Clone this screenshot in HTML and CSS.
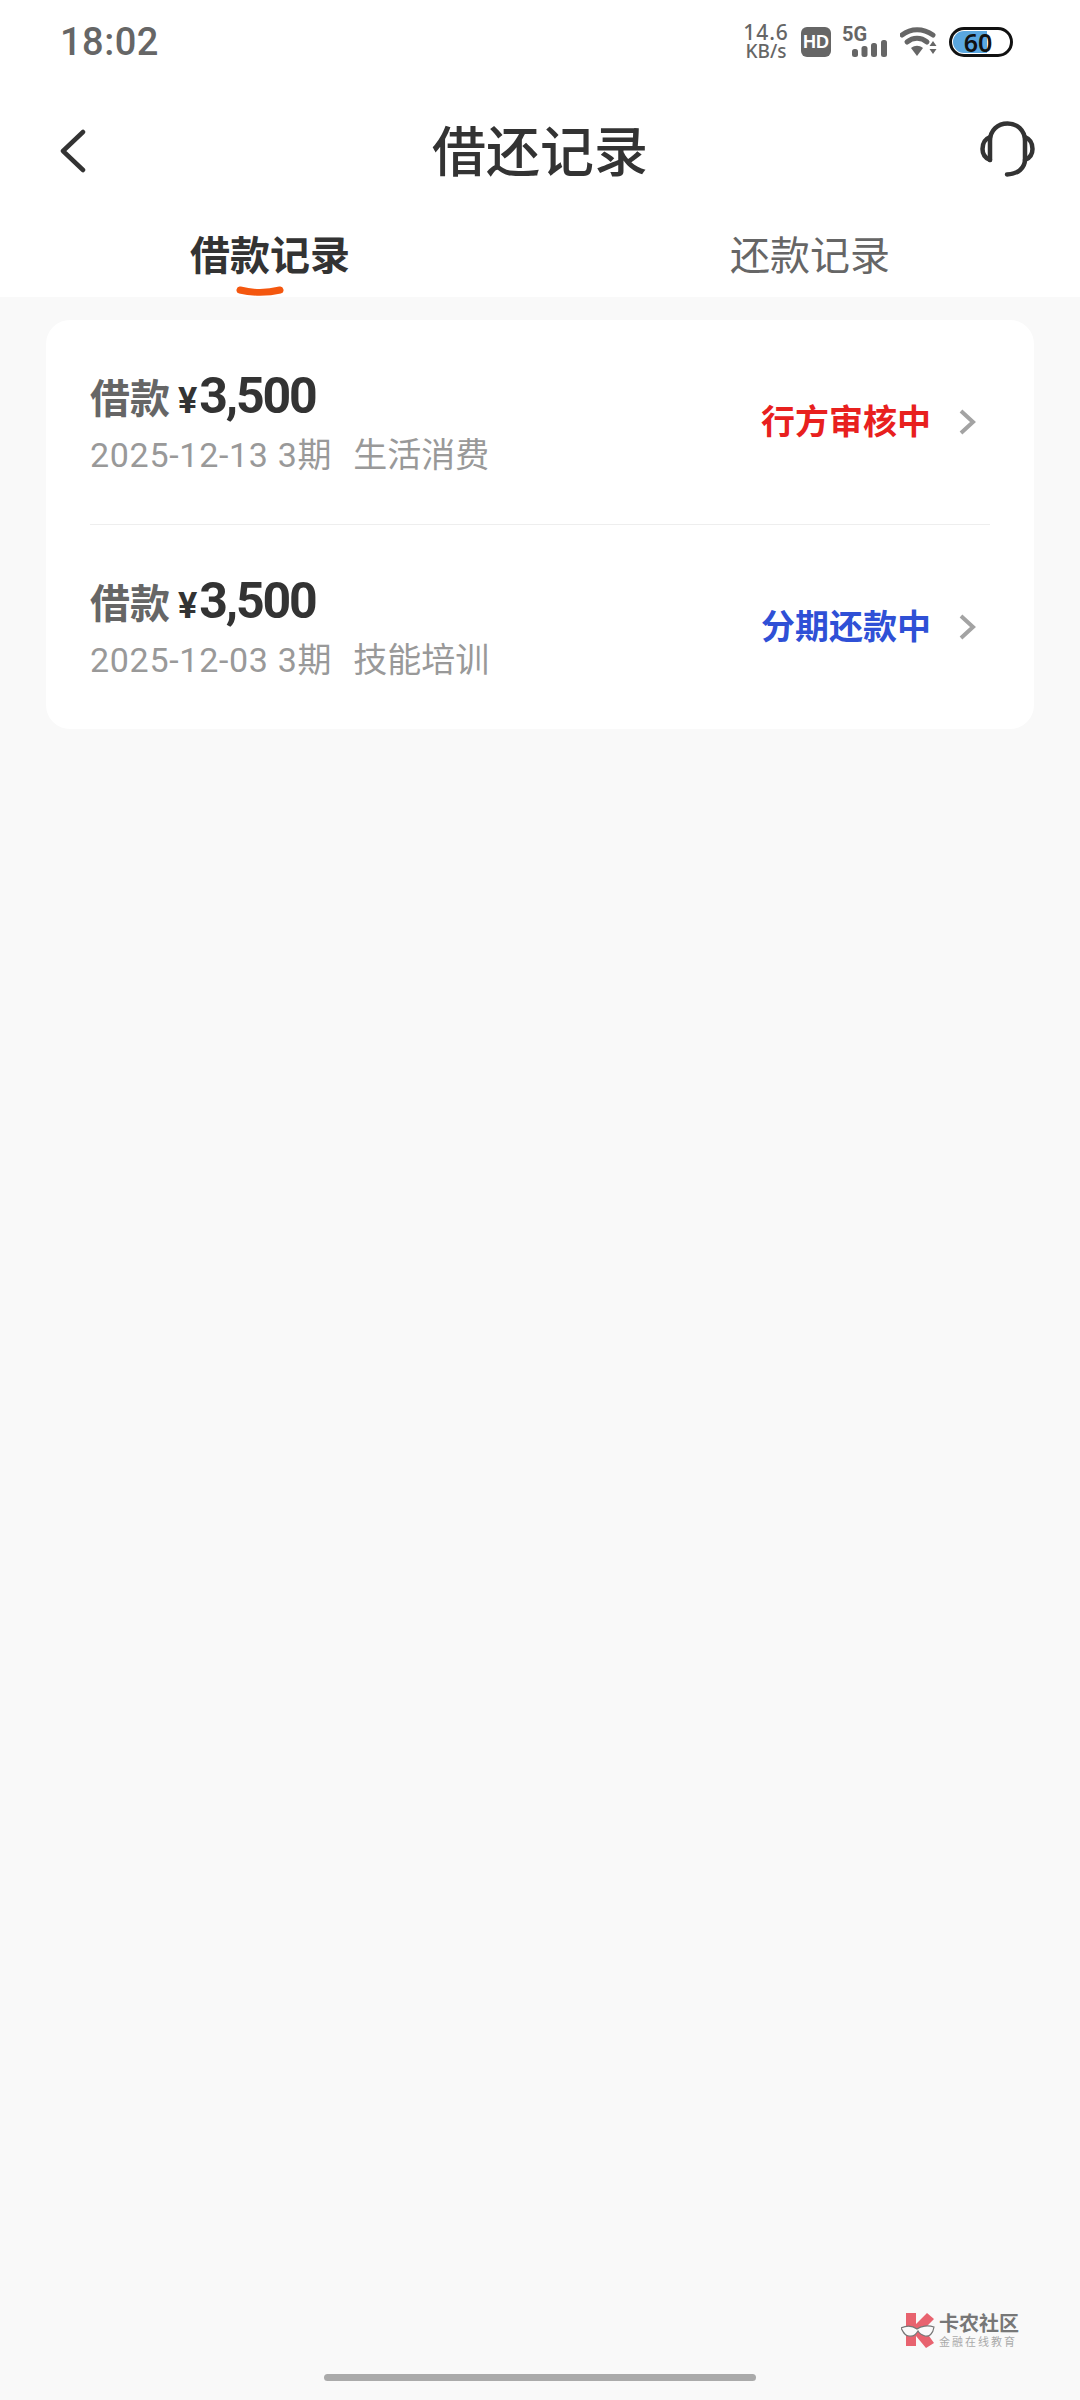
FILE: index.html
```html
<!DOCTYPE html>
<html>
<head>
    <title>借还记录</title>
    <link rel="stylesheet" href="styles.css">
</head>
<body>
    <div class="page">
        <div class="status-bar">
            <span class="time">18:02</span>
            <div class="status-icons">
                <div class="speed"><span class="speed-num">14.6</span><span class="speed-unit">KB/s</span></div>
                <span class="hd">HD</span>
                <div class="signal">
                    <span class="five-g">5G</span>
                    <svg class="signal-bars" width="35" height="17" viewBox="0 0 35 17">
                        <rect x="0" y="9" width="6" height="8" rx="2.5" fill="#666"/>
                        <rect x="9.5" y="6" width="6" height="11" rx="2.5" fill="#666"/>
                        <rect x="19" y="3" width="6" height="14" rx="2.5" fill="#666"/>
                        <rect x="29" y="0" width="6" height="17" rx="2.5" fill="#666"/>
                    </svg>
                </div>
                <svg class="wifi" width="37" height="30" viewBox="0 0 37 30">
                    <path d="M2 8C11 1 23 1 33 8" fill="none" stroke="#666" stroke-width="5" stroke-linecap="round"/>
                    <path d="M7 15C13 10 21 10 27 15" fill="none" stroke="#666" stroke-width="5" stroke-linecap="round"/>
                    <path d="M11 21C15 18 19 18 23 21L17 29Z" fill="#666"/>
                    <path d="M33 14L36.500 19H29.500ZM29.500 22H36.500L33 27Z" fill="#666"/>
                </svg>
                <div class="battery"><div class="battery-fill"></div><span class="battery-num">60</span></div>
            </div>
        </div>

        <div class="nav-bar">
            <svg class="back" width="28" height="44" viewBox="0 0 28 44">
                <path d="M24 3L4 22L24 41" fill="none" stroke="#333" stroke-width="4.500" stroke-linecap="round" stroke-linejoin="round"/>
            </svg>
            <h1 class="title">借还记录</h1>
            <svg class="service" width="55" height="56" viewBox="0 0 55 56">
                <path d="M10 39V20C10 9 18 2.500 27.500 2.500C37 2.500 45 9 45 20V38C45 47 38 53 27 53.500" fill="none" stroke="#333" stroke-width="4.500" stroke-linecap="round"/>
                <path d="M10 16C5 18 2.500 23 2.500 28C2.500 33 5 37 10 39" fill="none" stroke="#333" stroke-width="4.500" stroke-linecap="round"/>
                <path d="M45 16C50 18 52.500 23 52.500 28C52.500 33 50 37 45 39" fill="none" stroke="#333" stroke-width="4.500" stroke-linecap="round"/>
            </svg>
        </div>

        <div class="tabs">
            <div class="tab active">借款记录
                <svg class="tab-mark" width="48" height="12" viewBox="0 0 48 12">
                    <path d="M4 4C16 7 32 7 44 4" fill="none" stroke="#f4570f" stroke-width="7" stroke-linecap="round"/>
                </svg>
            </div>
            <div class="tab">还款记录</div>
        </div>

        <div class="main">
            <div class="card">
                <div class="record">
                    <div class="record-info">
                        <div class="amount-line"><span class="label">借款</span><span class="yen">¥</span><span class="amount">3,500</span></div>
                        <div class="meta"><span class="date">2025-12-13 3期</span><span>生活消费</span></div>
                    </div>
                    <span class="state red">行方审核中</span>
                    <svg class="arrow" width="18" height="28" viewBox="0 0 18 28">
                        <path d="M3 3L15 14L3 25" fill="none" stroke="#a3a3a3" stroke-width="4"/>
                    </svg>
                </div>
                <div class="record">
                    <div class="record-info">
                        <div class="amount-line"><span class="label">借款</span><span class="yen">¥</span><span class="amount">3,500</span></div>
                        <div class="meta"><span class="date">2025-12-03 3期</span><span>技能培训</span></div>
                    </div>
                    <span class="state blue">分期还款中</span>
                    <svg class="arrow" width="18" height="28" viewBox="0 0 18 28">
                        <path d="M3 3L15 14L3 25" fill="none" stroke="#a3a3a3" stroke-width="4"/>
                    </svg>
                </div>
            </div>
        </div>

        <div class="home-bar"><div class="home-line"></div></div>

        <!-- 水印 -->
        <div class="watermark">
            <svg width="34" height="36" viewBox="0 0 34 36">
                <path d="M5 1H15V12L26 1L33 7L23 17L33 31L25 36L15 24V34H5Z" fill="#e8636f"/>
                <path d="M0 16C6 13 12 14 16 17C20 14 27 13 33 15C32 22 28 25 24 24C21 23 18 21 17 19C15 22 13 25 8 24C4 24 2 20 0 16Z" fill="#fafafa" stroke="#777" stroke-width="1.200"/>
            </svg>
            <div class="wm-text">
                <span class="wm-name">卡农社区</span>
                <span class="wm-sub">金融在线教育</span>
            </div>
        </div>
    </div>
</body>
</html>
```

FILE: styles.css
```css
* { box-sizing: border-box; }
body { margin: 0; font-family: "Noto Sans CJK SC", Roboto, sans-serif; }
.page {
    position: relative;
    width: 1080px;
    height: 2400px;
    display: flex;
    flex-direction: column;
    background: #f9f9f9;
}

/* 状态栏 */
.status-bar {
    height: 84px;
    padding: 0 67px 0 60px;
    display: flex;
    justify-content: space-between;
    align-items: center;
    background: #fff;
}
.time { font-family: Roboto, sans-serif; font-size: 38px; font-weight: 500; color: #666; letter-spacing: 0.5px; }
.status-icons { display: flex; align-items: center; }
.speed { width: 46px; display: flex; flex-direction: column; align-items: center; font-family: "Noto Sans", sans-serif; color: #666; font-weight: 500; }
.speed-num { font-size: 21px; line-height: 19px; letter-spacing: 1px; }
.speed-unit { font-size: 19px; line-height: 19px; }
.hd {
    width: 30px; height: 30px;
    margin-left: 12px;
    border-radius: 6px;
    background: #666;
    color: #fff;
    font-family: "Liberation Sans", sans-serif;
    font-size: 18px;
    font-weight: 700;
    line-height: 30px;
    text-align: center;
}
.signal { position: relative; width: 45px; height: 30px; margin-left: 11px; }
.five-g { display: block; font-family: Roboto, sans-serif; font-size: 20px; font-weight: 700; color: #666; line-height: 15px; }
.signal-bars { position: absolute; right: 0; bottom: 0; }
.wifi { margin-left: 13px; }
.battery {
    position: relative;
    width: 64px; height: 30px;
    margin-left: 12px;
    border: 3px solid #111;
    border-radius: 15px;
    display: flex;
    align-items: center;
    justify-content: center;
}
.battery-fill { position: absolute; left: 1px; top: 1px; bottom: 1px; width: 34px; border-radius: 11px 0 0 11px; background: #5aa7e0; }
.battery-num { position: relative; font-family: "Noto Sans", sans-serif; font-size: 25px; font-weight: 600; color: #111; line-height: 24px; margin-right: 6px; }

/* 标题栏 */
.nav-bar {
    position: relative;
    height: 130px;
    padding: 0 45px 0 59px;
    display: flex;
    justify-content: space-between;
    align-items: center;
    background: #fff;
}
.back { margin-top: 3px; }
.title {
    position: absolute;
    left: 0; right: 0;
    margin: -2px 0 0;
    text-align: center;
    font-size: 54px;
    font-weight: 500;
    color: #333;
}

/* tab */
.tabs { height: 83px; display: flex; background: #fff; }
.tab {
    position: relative;
    flex: 1;
    text-align: center;
    font-size: 40px;
    line-height: 78px;
    color: #666;
}
.tab.active { color: #333; font-weight: 700; }
.tab-mark { position: absolute; left: 236px; top: 72px; }

/* 列表 */
.main { flex: 1; padding: 23px 46px 0; }
.card { background: #fff; border-radius: 24px; padding: 0 44px; }
.record {
    height: 204px;
    display: flex;
    align-items: center;
}
.record + .record { height: 205px; border-top: 1px solid #eee; }
.record-info { flex: 1; padding-top: 4px; }
.amount-line { display: flex; align-items: baseline; height: 64px; margin-top: -2px; color: #333; }
.label { font-size: 40px; font-weight: 700; color: #666; }
.yen { margin-left: 8px; font-family: Roboto, sans-serif; font-size: 36px; font-weight: 700; }
.amount { font-family: Roboto, sans-serif; font-size: 50px; font-weight: 700; letter-spacing: -2.2px; margin-left: 2px; }
.meta { display: flex; gap: 21px; font-family: Roboto, "Noto Sans CJK SC", sans-serif; font-size: 34px; line-height: 48px; color: #999; }
.date { letter-spacing: 0.7px; }
.state { font-size: 34px; font-weight: 700; margin-bottom: 5px; }
.state.red { color: #e8201e; }
.state.blue { color: #2f50d6; }
.arrow { margin: 0 14px 0 27px; }

/* 底部 */
.home-bar { height: 26px; display: flex; justify-content: center; }
.home-line { width: 432px; height: 7px; border-radius: 4px; background: #aaa; }
.watermark { position: absolute; left: 901px; top: 2312px; display: flex; gap: 4px; align-items: center; }
.wm-text { display: flex; flex-direction: column; }
.wm-name { font-size: 20px; font-weight: 700; color: #777; line-height: 22px; }
.wm-sub { font-size: 11px; color: #aaa; letter-spacing: 2px; line-height: 14px; }
```
